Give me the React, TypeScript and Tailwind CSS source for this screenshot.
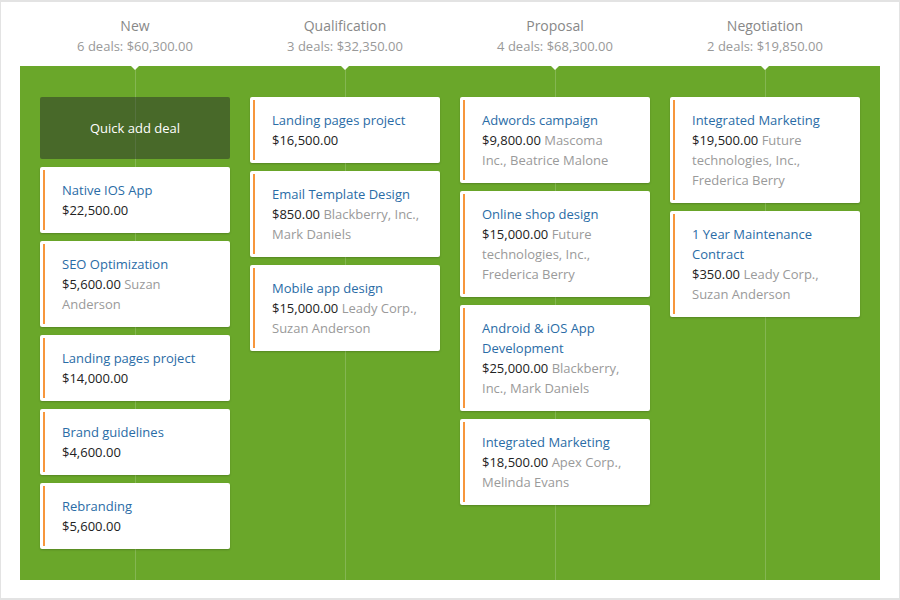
import React from 'react';

type Deal = {
  title: string;
  price: string;
  company?: string;
};

type Stage = {
  name: string;
  summary: string;
  quickAdd?: boolean;
  deals: Deal[];
};

const stages: Stage[] = [
  {
    name: 'New',
    summary: '6 deals: $60,300.00',
    quickAdd: true,
    deals: [
      { title: 'Native IOS App', price: '$22,500.00' },
      { title: 'SEO Optimization', price: '$5,600.00', company: 'Suzan Anderson' },
      { title: 'Landing pages project', price: '$14,000.00' },
      { title: 'Brand guidelines', price: '$4,600.00' },
      { title: 'Rebranding', price: '$5,600.00' },
    ],
  },
  {
    name: 'Qualification',
    summary: '3 deals: $32,350.00',
    deals: [
      { title: 'Landing pages project', price: '$16,500.00' },
      { title: 'Email Template Design', price: '$850.00', company: 'Blackberry, Inc., Mark Daniels' },
      { title: 'Mobile app design', price: '$15,000.00', company: 'Leady Corp., Suzan Anderson' },
    ],
  },
  {
    name: 'Proposal',
    summary: '4 deals: $68,300.00',
    deals: [
      { title: 'Adwords campaign', price: '$9,800.00', company: 'Mascoma Inc., Beatrice Malone' },
      { title: 'Online shop design', price: '$15,000.00', company: 'Future technologies, Inc., Frederica Berry' },
      { title: 'Android & iOS App Development', price: '$25,000.00', company: 'Blackberry, Inc., Mark Daniels' },
      { title: 'Integrated Marketing', price: '$18,500.00', company: 'Apex Corp., Melinda Evans' },
    ],
  },
  {
    name: 'Negotiation',
    summary: '2 deals: $19,850.00',
    deals: [
      { title: 'Integrated Marketing', price: '$19,500.00', company: 'Future technologies, Inc., Frederica Berry' },
      { title: '1 Year Maintenance Contract', price: '$350.00', company: 'Leady Corp., Suzan Anderson' },
    ],
  },
];

const DealCard: React.FC<{ deal: Deal }> = ({ deal }) => (
  <div className="relative bg-white rounded-[2px] shadow-[0_1px_2px_rgba(0,0,0,0.2)] pl-[22px] pr-[20px] py-[13px] text-[13px] leading-[20px]">
    <span className="absolute left-[3px] top-[3px] bottom-[3px] w-[2px] bg-[#f7963c]" />
    <div className="text-[#2a6ca6]">{deal.title}</div>
    <div>
      <span className="text-[#222]">{deal.price}</span>
      {deal.company && <span className="text-[#9a9a9a]"> {deal.company}</span>}
    </div>
  </div>
);

export default function App() {
  return (
    <div
      className="w-[900px] h-[600px] box-border border-x border-y-2 border-[#e3e3e3] bg-white flex flex-col px-[19px] pb-[18px]"
      style={{ fontFamily: '"Open Sans", "Noto Sans", sans-serif' }}
    >
      <div className="h-[64px] flex px-[10px]">
        {stages.map((s) => (
          <div key={s.name} className="w-[210px] flex flex-col items-center pt-[14px]">
            <div className="text-[14px] leading-[20px] text-[#888]">{s.name}</div>
            <div className="text-[13px] leading-[20px] text-[#999]">{s.summary}</div>
          </div>
        ))}
      </div>
      <div className="flex-1 bg-[#6aa72a] flex px-[10px]">
        {stages.map((s) => (
          <div key={s.name} className="relative w-[210px] px-[10px] pt-[31px]">
            <span className="absolute left-[105px] top-0 bottom-0 w-px bg-[#84b652]" />
            <span className="absolute left-[101px] top-0 w-0 h-0 border-x-[4px] border-x-transparent border-t-[4px] border-t-white" />
            <div className="relative flex flex-col gap-2">
              {s.quickAdd && (
                <div className="h-[62px] pt-[2px] rounded-[2px] bg-[rgba(30,30,41,0.45)] flex items-center justify-center text-white text-[13px]">
                  Quick add deal
                </div>
              )}
              {s.deals.map((d, i) => (
                <DealCard key={i} deal={d} />
              ))}
            </div>
          </div>
        ))}
      </div>
    </div>
  );
}
